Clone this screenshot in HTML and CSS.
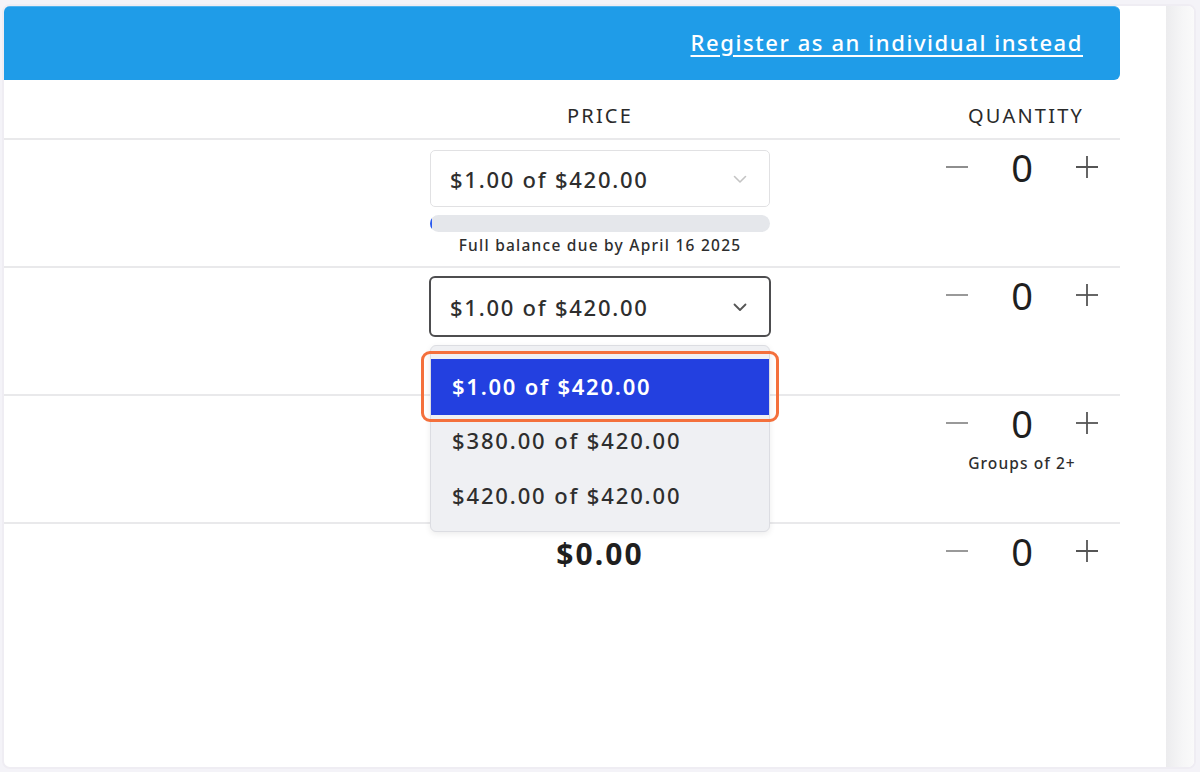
FILE: index.html
```html
<!DOCTYPE html>
<html lang="en">
<head>
<meta charset="utf-8">
<title>Tickets</title>
<link rel="stylesheet" href="styles.css">
</head>
<body>
<div class="frame">
  <div class="main">
    <div class="banner">
      <a class="banner-link" href="#">Register as an individual instead</a>
    </div>
    <div class="table">
      <div class="row head">
        <div class="hcell"></div>
        <div class="hcell hprice"><span class="col-title">PRICE</span></div>
        <div class="hcell hqty"><span class="col-title">QUANTITY</span></div>
      </div>

      <div class="row">
        <div class="cell name"></div>
        <div class="cell price">
          <div class="select">
            <span>$1.00 of $420.00</span>
            <svg class="chev" width="14" height="9" viewBox="0 0 14 9"><polyline points="1.5,1.5 7,7 12.5,1.5" fill="none" stroke="#c4c4c4" stroke-width="1.6" stroke-linecap="round" stroke-linejoin="round"/></svg>
          </div>
          <div class="progress"><div class="fill" style="width:2px"></div></div>
          <div class="note">Full balance due by April 16 2025</div>
        </div>
        <div class="cell qty">
          <div class="stepper">
            <span class="btn minus"><svg width="24" height="24" viewBox="0 0 24 24"><line x1="1" y1="12" x2="23" y2="12" stroke="#8e8e8e" stroke-width="1.8"/></svg></span>
            <span class="num">0</span>
            <span class="btn plus"><svg width="24" height="24" viewBox="0 0 24 24"><line x1="1" y1="12" x2="23" y2="12" stroke="#555" stroke-width="1.8"/><line x1="12" y1="1" x2="12" y2="23" stroke="#555" stroke-width="1.8"/></svg></span>
          </div>
        </div>
      </div>

      <div class="row">
        <div class="cell name"></div>
        <div class="cell price">
          <div class="select-wrap">
            <div class="select focus">
              <span>$1.00 of $420.00</span>
              <svg class="chev" width="14" height="9" viewBox="0 0 14 9"><polyline points="1.5,1.5 7,7 12.5,1.5" fill="none" stroke="#555" stroke-width="1.8" stroke-linecap="round" stroke-linejoin="round"/></svg>
            </div>
            <ul class="menu">
              <li class="opt active">$1.00 of $420.00</li>
              <li class="opt">$380.00 of $420.00</li>
              <li class="opt">$420.00 of $420.00</li>
            </ul>
          </div>
        </div>
        <div class="cell qty">
          <div class="stepper">
            <span class="btn minus"><svg width="24" height="24" viewBox="0 0 24 24"><line x1="1" y1="12" x2="23" y2="12" stroke="#8e8e8e" stroke-width="1.8"/></svg></span>
            <span class="num">0</span>
            <span class="btn plus"><svg width="24" height="24" viewBox="0 0 24 24"><line x1="1" y1="12" x2="23" y2="12" stroke="#555" stroke-width="1.8"/><line x1="12" y1="1" x2="12" y2="23" stroke="#555" stroke-width="1.8"/></svg></span>
          </div>
        </div>
      </div>

      <div class="row">
        <div class="cell name"></div>
        <div class="cell price"></div>
        <div class="cell qty">
          <div class="stepper">
            <span class="btn minus"><svg width="24" height="24" viewBox="0 0 24 24"><line x1="1" y1="12" x2="23" y2="12" stroke="#8e8e8e" stroke-width="1.8"/></svg></span>
            <span class="num">0</span>
            <span class="btn plus"><svg width="24" height="24" viewBox="0 0 24 24"><line x1="1" y1="12" x2="23" y2="12" stroke="#555" stroke-width="1.8"/><line x1="12" y1="1" x2="12" y2="23" stroke="#555" stroke-width="1.8"/></svg></span>
          </div>
          <div class="qty-note">Groups of 2+</div>
        </div>
      </div>

      <div class="row last">
        <div class="cell name"></div>
        <div class="cell price"><div class="amount">$0.00</div></div>
        <div class="cell qty">
          <div class="stepper">
            <span class="btn minus"><svg width="24" height="24" viewBox="0 0 24 24"><line x1="1" y1="12" x2="23" y2="12" stroke="#8e8e8e" stroke-width="1.8"/></svg></span>
            <span class="num">0</span>
            <span class="btn plus"><svg width="24" height="24" viewBox="0 0 24 24"><line x1="1" y1="12" x2="23" y2="12" stroke="#555" stroke-width="1.8"/><line x1="12" y1="1" x2="12" y2="23" stroke="#555" stroke-width="1.8"/></svg></span>
          </div>
        </div>
      </div>
    </div>
  </div>
  <div class="scroll"></div>
</div>
</body>
</html>
```

FILE: styles.css
```css
* { box-sizing: border-box; }
html, body { margin: 0; padding: 0; }
body {
  width: 1200px;
  height: 772px;
  background: #f4f3f8;
  font-family: "Noto Sans", "Open Sans", sans-serif;
  color: #2a2a2a;
  overflow: hidden;
}
.frame {
  margin: 4px 4px 0 2px;
  height: 765px;
  background: #fff;
  border: 2px solid #efedf3;
  border-radius: 8px;
  display: flex;
  overflow: hidden;
}
.main { flex: 1; }
.scroll {
  width: 28px;
  background: linear-gradient(to right, #ececee, #f6f6f7 60%, #fafafa);
}
.banner {
  width: 1116px;
  height: 74px;
  background: #1f9ce8;
  border-top: 1px solid #4fb2ee;
  border-radius: 0 6px 6px 0;
  display: flex;
  align-items: center;
  justify-content: flex-end;
  padding-right: 37px;
}
.banner-link {
  color: #fff;
  font-size: 22px;
  font-weight: 500;
  letter-spacing: 0.072em;
  text-decoration: underline;
  text-underline-offset: 4px;
  text-decoration-thickness: 1.5px;
  margin-top: -4px;
}
.table { width: 1116px; }
.row {
  display: grid;
  grid-template-columns: 426px 340px 1fr;
  height: 128px;
  border-bottom: 2px solid #e9e9eb;
}
.row.head { height: 60px; }
.row.last { border-bottom: none; }
.hcell {
  display: flex;
  align-items: flex-end;
  padding-bottom: 9px;
}
.hprice { justify-content: center; }
.hqty { justify-content: flex-end; padding-right: 36px; }
.col-title {
  font-size: 20px;
  letter-spacing: 0.11em;
  color: #2a2a2a;
}
.cell { position: relative; }
.price { display: flex; flex-direction: column; align-items: stretch; }
.select {
  margin-top: 10px;
  height: 57px;
  border: 1px solid #e1e1e3;
  border-radius: 5px;
  display: flex;
  align-items: center;
  justify-content: space-between;
  padding: 0 22px 0 19px;
  font-size: 22px;
  font-weight: 500;
  letter-spacing: 0.08em;
  color: #2e2e2e;
  background: #fff;
}
.select.focus {
  margin: 8px -1px 0 -1px;
  height: 61px;
  border: 2px solid #4d4d4f;
  border-radius: 6px;
  padding-left: 19px;
}
.chev { display: block; margin-top: 2px; }
.progress {
  margin-top: 8px;
  height: 17px;
  background: #e5e7eb;
  border-radius: 9px;
  overflow: hidden;
}
.progress .fill { height: 100%; background: #2b5bf0; }
.note {
  margin-top: 2px;
  text-align: center;
  font-size: 15.5px;
  font-weight: 500;
  letter-spacing: 0.08em;
  color: #2e2e2e;
}
.select-wrap { position: relative; }
.menu {
  position: absolute;
  left: 0;
  right: 0;
  top: calc(100% + 8px);
  margin: 0;
  padding: 13px 0 6px;
  list-style: none;
  background: #eff0f3;
  border: 1px solid #dcdde2;
  border-radius: 6px;
  box-shadow: 0 2px 6px rgba(0, 0, 0, 0.08);
  z-index: 5;
}
.opt {
  height: 55px;
  display: flex;
  align-items: center;
  padding: 0 0 5px 21px;
  font-size: 22px;
  font-weight: 500;
  letter-spacing: 0.085em;
  color: #2e2e2e;
  position: relative;
}
.opt.active {
  height: 56px;
  padding-bottom: 3px;
  background: #2340e0;
  color: #fff;
  font-weight: 600;
  letter-spacing: 0.08em;
}
.opt.active::after {
  content: "";
  position: absolute;
  left: -10px;
  right: -10px;
  top: -8px;
  bottom: -7px;
  border: 3px solid #f4703c;
  border-radius: 9px;
}
.amount {
  margin-top: 9px;
  text-align: center;
  font-size: 30px;
  font-weight: 700;
  letter-spacing: 0.07em;
  color: #1f1f1f;
}
.qty {
  display: flex;
  flex-direction: column;
  align-items: flex-end;
  padding-right: 16px;
}
.stepper {
  margin-top: 6px;
  display: flex;
  align-items: center;
  height: 42px;
}
.btn {
  width: 34px;
  display: flex;
  justify-content: center;
  align-items: center;
}
.btn svg { display: block; }
.num {
  width: 96px;
  text-align: center;
  font-size: 38px;
  line-height: 42px;
  color: #1f1f1f;
}
.qty-note {
  width: 164px;
  text-align: center;
  margin-top: 8px;
  font-size: 15.5px;
  font-weight: 500;
  letter-spacing: 0.07em;
  color: #2e2e2e;
}
```
